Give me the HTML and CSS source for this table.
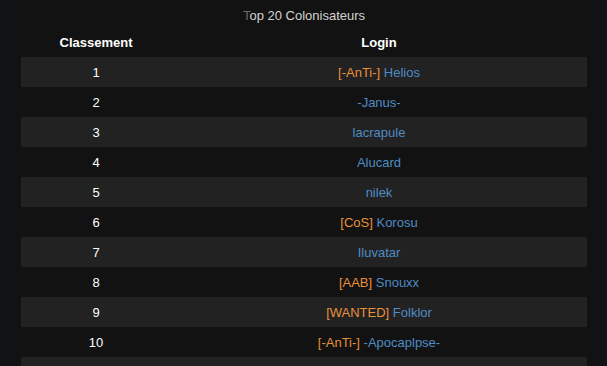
FILE: index.html
```html
<!DOCTYPE html>
<html lang="fr">
<head>
<meta charset="utf-8">
<title>Top 20 Colonisateurs</title>
<link rel="stylesheet" href="styles.css">
</head>
<body>
<div class="wrap">
  <div class="title"><span class="first">T</span>op 20 Colonisateurs</div>
  <table class="ranking">
    <thead>
      <tr><th class="rank">Classement</th><th>Login</th></tr>
    </thead>
    <tbody>
      <tr><td>1</td><td><span class="tag">[-AnTi-]</span> <span class="name">Helios</span></td></tr>
      <tr><td>2</td><td><span class="name">-Janus-</span></td></tr>
      <tr><td>3</td><td><span class="name">lacrapule</span></td></tr>
      <tr><td>4</td><td><span class="name">Alucard</span></td></tr>
      <tr><td>5</td><td><span class="name">nilek</span></td></tr>
      <tr><td>6</td><td><span class="tag">[CoS]</span> <span class="name">Korosu</span></td></tr>
      <tr><td>7</td><td><span class="name">Iluvatar</span></td></tr>
      <tr><td>8</td><td><span class="tag">[AAB]</span> <span class="name">Snouxx</span></td></tr>
      <tr><td>9</td><td><span class="tag">[WANTED]</span> <span class="name">Folklor</span></td></tr>
      <tr><td>10</td><td><span class="tag">[-AnTi-]</span> <span class="name">-Apocaplpse-</span></td></tr>
      <tr><td></td><td></td></tr>
    </tbody>
  </table>
</div>
</body>
</html>
```
FILE: styles.css
```css
html, body {
  margin: 0;
  padding: 0;
  background: #111216;
}
body {
  font-family: "Liberation Sans", Arial, sans-serif;
  font-size: 13px;
  color: #ffffff;
}
.wrap {
  width: 566px;
  margin-left: 21px;
  background: #121212;
}
.title {
  height: 28px;
  line-height: 31px;
  text-align: center;
  color: #d2d2d2;
}
.title .first {
  color: #6a6a6a;
}
.ranking {
  width: 100%;
  border-collapse: collapse;
}
.ranking th {
  height: 29px;
  padding: 0;
  font-weight: bold;
  color: #ffffff;
  text-align: center;
  vertical-align: middle;
}
.ranking th.rank {
  width: 150px;
}
.ranking td {
  height: 30px;
  padding: 0;
  text-align: center;
  vertical-align: middle;
  color: #ffffff;
}
.ranking tbody tr:nth-child(odd) {
  background: #222222;
}
.ranking tbody tr:nth-child(even) {
  background: #121212;
}
.tag {
  color: #e8903a;
}
.name {
  color: #4f8cc4;
}
```
